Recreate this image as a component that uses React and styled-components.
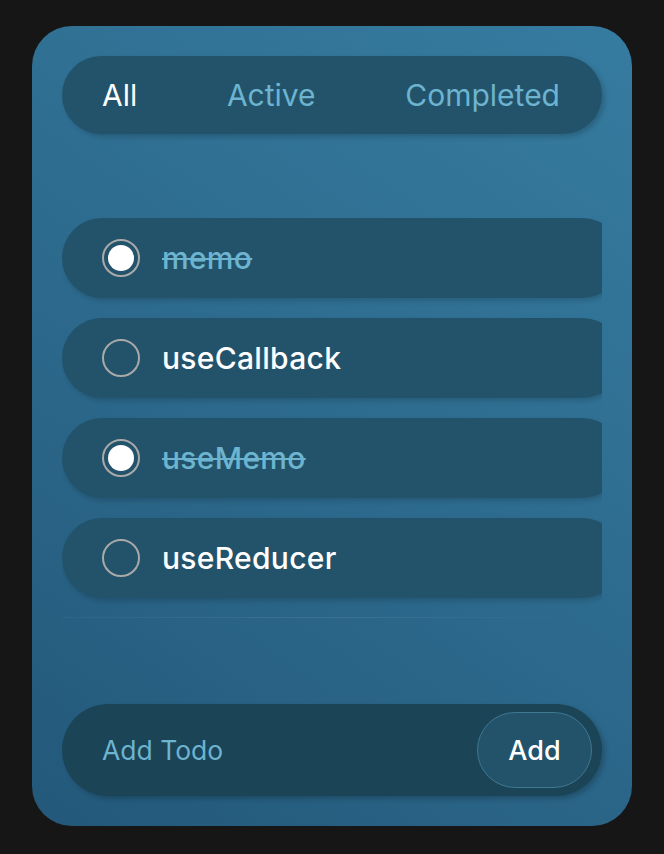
import React from 'react';
import styled, { createGlobalStyle } from 'styled-components';

const Colors = {
  page: '#161616',
  panel: '#22536b',
  field: '#1b4457',
  accent: '#6cb4cf',
  white: '#ffffff',
  ring: '#a9a9a9',
};

const GlobalStyle = createGlobalStyle`
  html, body {
    margin: 0;
    padding: 0;
    background: ${Colors.page};
    font-family: Inter, "Noto Sans", sans-serif;
  }
`;

const Page = styled.div`
  min-height: 100vh;
  box-sizing: border-box;
  padding-bottom: 2px;
  display: flex;
  align-items: center;
  justify-content: center;
`;

const Card = styled.div`
  width: 600px;
  height: 800px;
  box-sizing: border-box;
  padding: 30px;
  border-radius: 40px;
  background: linear-gradient(215deg, #367ca0 0%, #2d6b8e 50%, #23587a 100%);
  display: flex;
  flex-direction: column;
`;

const TabBar = styled.div`
  height: 78px;
  border-radius: 39px;
  background: ${Colors.panel};
  box-shadow: 3px 3px 5px rgba(0, 0, 0, 0.18);
  display: flex;
  align-items: center;
  justify-content: space-between;
  padding: 0 42px 0 40px;
`;

const Tab = styled.span`
  font-size: 30px;
  color: ${p => (p.$active ? Colors.white : Colors.accent)};
`;

const List = styled.div`
  margin-top: 84px;
  width: 540px;
  overflow: hidden;
  display: flex;
  flex-direction: column;
  gap: 20px;
  padding-bottom: 19px;
  border-bottom: 1px solid;
  border-image: linear-gradient(90deg, rgba(255, 255, 255, 0.03), rgba(255, 255, 255, 0.08) 50%, rgba(255, 255, 255, 0) 95%) 1;
`;

const Item = styled.div`
  flex: none;
  width: 560px;
  height: 80px;
  border-radius: 40px;
  background: ${Colors.panel};
  box-shadow: 2px 3px 5px rgba(0, 0, 0, 0.15);
  display: flex;
  align-items: center;
  padding-left: 40px;
  box-sizing: border-box;
`;

const Radio = styled.span`
  width: 38px;
  height: 38px;
  box-sizing: border-box;
  border-radius: 50%;
  border: 2px solid ${Colors.ring};
  display: flex;
  align-items: center;
  justify-content: center;
  &::after {
    content: '';
    width: 26px;
    height: 26px;
    border-radius: 50%;
    background: ${Colors.white};
    display: ${p => (p.$checked ? 'block' : 'none')};
  }
`;

const ItemText = styled.span`
  margin-left: 22px;
  font-size: 30px;
  font-weight: 500;
  letter-spacing: 0.3px;
  color: ${p => (p.$done ? Colors.accent : Colors.white)};
  text-decoration: ${p => (p.$done ? 'line-through' : 'none')};
  text-decoration-thickness: 2px;
`;

const Spacer = styled.div`
  flex: 1;
`;

const InputBar = styled.div`
  height: 92px;
  border-radius: 46px;
  background: ${Colors.field};
  box-shadow: 3px 3px 5px rgba(0, 0, 0, 0.2);
  display: flex;
  align-items: center;
  justify-content: space-between;
  padding: 0 10px 0 40px;
`;

const Placeholder = styled.span`
  font-size: 26.5px;
  color: ${Colors.accent};
`;

const AddButton = styled.button`
  width: 115px;
  height: 76px;
  border-radius: 38px;
  border: 1.5px solid #3f7892;
  background: ${Colors.panel};
  color: ${Colors.white};
  font-family: inherit;
  font-size: 27px;
  font-weight: 500;
`;

const todos = [
  { text: 'memo', done: true },
  { text: 'useCallback', done: false },
  { text: 'useMemo', done: true },
  { text: 'useReducer', done: false },
];

export default function App() {
  return (
    <Page>
      <GlobalStyle />
      <Card>
        <TabBar>
          <Tab $active>All</Tab>
          <Tab>Active</Tab>
          <Tab>Completed</Tab>
        </TabBar>
        <List>
          {todos.map(t => (
            <Item key={t.text}>
              <Radio $checked={t.done} />
              <ItemText $done={t.done}>{t.text}</ItemText>
            </Item>
          ))}
        </List>
        <Spacer />
        <InputBar>
          <Placeholder>Add Todo</Placeholder>
          <AddButton>Add</AddButton>
        </InputBar>
      </Card>
    </Page>
  );
}
